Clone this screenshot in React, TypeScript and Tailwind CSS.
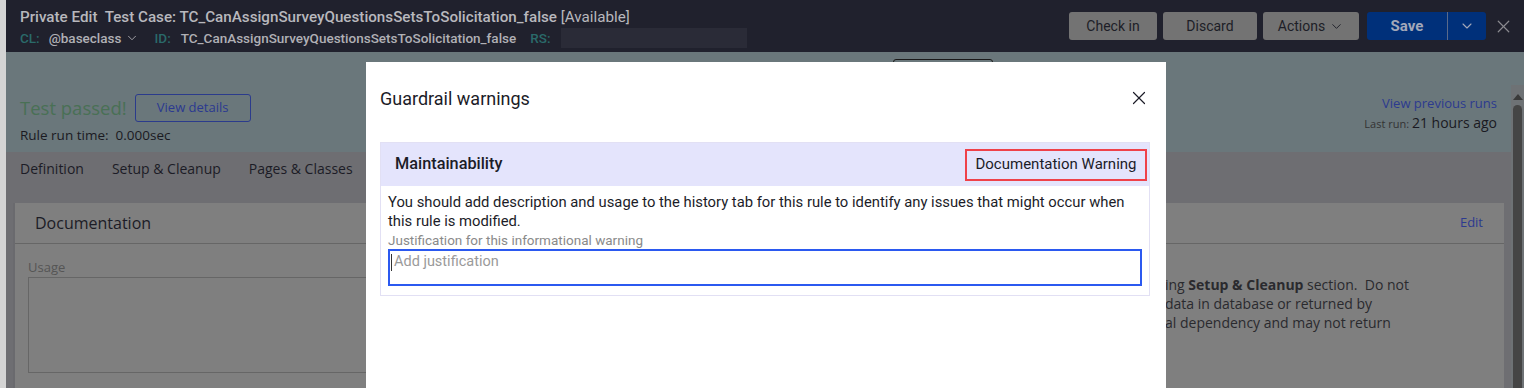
import { ChevronDown, X } from 'lucide-react';

const ui = "font-['Roboto',sans-serif]";

const tabs = ["Definition", "Setup & Cleanup", "Pages & Classes"];

const HeaderButton = ({ label, width, chevron }: { label: string; width: string; chevron?: boolean }) => (
  <button className={`${width} h-[28px] rounded-[3px] bg-[#737373] text-[#1d1e27] text-[14px] flex items-center justify-center gap-[4px] ${ui}`}>
    {label}
    {chevron && <ChevronDown size={15} strokeWidth={1.5} />}
  </button>
);

const Header = () => (
  <div className="h-[52px] bg-[#20212d] flex items-center justify-between pl-[14px] pr-[10px] shrink-0">
    <div className={`flex flex-col gap-[1px] pt-[2px] ${ui}`}>
      <div className="text-[15.2px] leading-[20px] text-[#b8b8bd] font-medium whitespace-nowrap">
        Private Edit&nbsp; Test Case: TC_CanAssignSurveyQuestionsSetsToSolicitation_false{" "}
        <span className="font-normal">[Available]</span>
      </div>
      <div className="flex items-center text-[13.5px] leading-[20px] font-medium whitespace-nowrap">
        <span className="text-[#2a6a6a]">CL:</span>
        <span className="ml-[9px] text-[#b0b0b5] flex items-center gap-[3px]">
          @baseclass <ChevronDown size={14} strokeWidth={1.5} />
        </span>
        <span className="ml-[16px] text-[#2a6a6a]">ID:</span>
        <span className="ml-[10px] text-[#b0b0b5]">TC_CanAssignSurveyQuestionsSetsToSolicitation_false</span>
        <span className="ml-[14px] text-[#2a6a6a]">RS:</span>
        <span className="ml-[10px] w-[186px] h-[20px] bg-[#2a2b37]" />
      </div>
    </div>
    <div className="flex items-center">
      <div className="flex items-center gap-[6px]">
        <HeaderButton label="Check in" width="w-[88px]" />
        <HeaderButton label="Discard" width="w-[94px]" />
        <HeaderButton label="Actions" width="w-[96px]" chevron />
      </div>
      <div className="ml-[8px] flex h-[28px] rounded-[3px] bg-[#00307a] overflow-hidden">
        <button className={`w-[80px] text-[15px] font-bold text-[#a3a8b9] ${ui}`}>Save</button>
        <div className="w-px bg-[#5a6a8a]" />
        <button className="w-[38px] flex items-center justify-center text-[#a3a8b9]">
          <ChevronDown size={16} strokeWidth={1.6} />
        </button>
      </div>
      <X className="ml-[7px] text-[#8a8a8f]" size={21} strokeWidth={1.4} />
    </div>
  </div>
);

const Summary = () => (
  <div className="bg-[#6a777b] h-[100px] flex flex-col">
    <div className="h-[7px] pl-[887px] pt-[7px]">
      <div className="w-[100px] h-[20px] rounded-[3px] border border-[#1a1a1a]" />
    </div>
    <div className="mt-[35px] flex justify-between pl-[14px] pr-[14px] font-['Open_Sans',sans-serif]">
      <div className="flex flex-col">
        <div className="flex items-center">
          <span className="text-[18.5px] text-[#497055] leading-[28px]">Test passed!</span>
          <button className="ml-[8px] w-[116px] h-[28px] rounded-[3px] border border-[#2b3b8c] text-[13px] text-[#2b3990]">View details</button>
        </div>
        <div className="mt-[4px] text-[13.5px] leading-[18px] text-[#1a1a22]">
          Rule run time:&nbsp; 0.000sec
        </div>
      </div>
      <div className="flex flex-col items-end">
        <span className="text-[13px] leading-[18px] text-[#2c3a8f]">View previous runs</span>
        <span className="leading-[20px] text-[#1a1a22]">
          <span className="text-[11px] text-[#333]">Last run: </span>
          <span className="text-[14px]">21 hours ago</span>
        </span>
      </div>
    </div>
  </div>
);

const Documentation = () => (
  <div className="mx-[7px] bg-[#7f7f7f] border-l-2 border-[#6a6a6e] flex-1 font-['Open_Sans',sans-serif]">
    <div className="h-[41px] border-b border-[#666] flex items-center justify-between pl-[20px] pr-[21px]">
      <span className="text-[16px] text-[#1c1c26]">Documentation</span>
      <span className="text-[13px] text-[#2c3a8f]">Edit</span>
    </div>
    <div className="flex pl-[13px] pt-[14px]">
      <div className="w-[700px] flex flex-col">
        <span className="text-[13px] leading-[18px] text-[#555]">Usage</span>
        <div className="mt-[1px] h-[96px] border border-[#666]" />
      </div>
      <div className="ml-[437px] mt-[17px] text-[14px] leading-[19px] text-[#2a2a2e] whitespace-pre">
        <div>ing <b>Setup &amp; Cleanup</b> section.  Do not</div>
        <div>data in database or returned by</div>
        <div>al dependency and may not return</div>
      </div>
    </div>
  </div>
);

const Scrollbar = () => (
  <div className="w-[13px] bg-[#6a777b] flex flex-col pt-[33px]">
    <div className="flex-1 bg-[#6e7275] flex flex-col items-center pt-[9px]">
      <div className="w-0 h-0 border-l-[5px] border-r-[5px] border-b-[6px] border-l-transparent border-r-transparent border-b-[#3a3a3a]" />
      <div className="mt-[5px] w-[9px] flex-1 rounded-t-[5px] bg-[#454545]" />
    </div>
  </div>
);

const GuardrailModal = () => (
  <div className={`absolute left-[366px] top-[62px] w-[800px] h-[340px] bg-white ${ui}`}>
    <div className="h-[72px] flex items-center justify-between pl-[14px] pr-[16px]">
      <span className="text-[18px] text-[#1c1c28]">Guardrail warnings</span>
      <X size={22} strokeWidth={1.3} className="text-[#1c1c28]" />
    </div>
    <div className="mt-[8px] ml-[14px] mr-[16px] border border-[#e2e0f4]">
      <div className="h-[43px] bg-[#e4e4fc] flex items-center justify-between pl-[14px] pr-[2px]">
        <span className="text-[16.3px] font-medium text-[#1c1c28]">Maintainability</span>
        <span className="w-[182px] h-[32px] border-2 border-[#ef4149] flex items-center justify-center text-[15px] text-[#1c1c28]">
          Documentation Warning
        </span>
      </div>
      <div className="px-[7px] pt-[7px] pb-[9px]">
        <p className="text-[14.8px] leading-[19px] text-[#1c1c28]">
          You should add description and usage to the history tab for this rule to identify any issues that might occur when this rule is modified.
        </p>
        <div className="text-[13.5px] leading-[18px] text-[#8a8a8a]">Justification for this informational warning</div>
        <div className="h-[37px] border-2 border-[#2b59f0] pl-[1px] pt-[1px] flex items-start">
          <span className="w-px h-[17px] mt-[2px] bg-[#333]" />
          <span className="ml-[2px] text-[14.5px] leading-[20px] text-[#9a9a9a]">Add justification</span>
        </div>
      </div>
    </div>
  </div>
);

export default function App() {
  return (
    <div className="relative h-[388px] w-full overflow-hidden flex bg-[#d4d4d4]">
      <div className="w-[6px] shrink-0" />
      <div className="flex-1 flex flex-col">
        <Header />
        <div className="flex-1 flex">
          <div className="flex-1 flex flex-col">
            <Summary />
            <div className="bg-[#6e6e72] flex-1 flex flex-col">
              <div className="h-[32px] flex items-center gap-[28px] pl-[14px] font-['Open_Sans',sans-serif] text-[14px] text-[#1c1c26]">
                {tabs.map((t) => (
                  <span key={t}>{t}</span>
                ))}
              </div>
              <div className="h-[19px]" />
              <Documentation />
            </div>
          </div>
          <Scrollbar />
        </div>
      </div>
      <GuardrailModal />
    </div>
  );
}
